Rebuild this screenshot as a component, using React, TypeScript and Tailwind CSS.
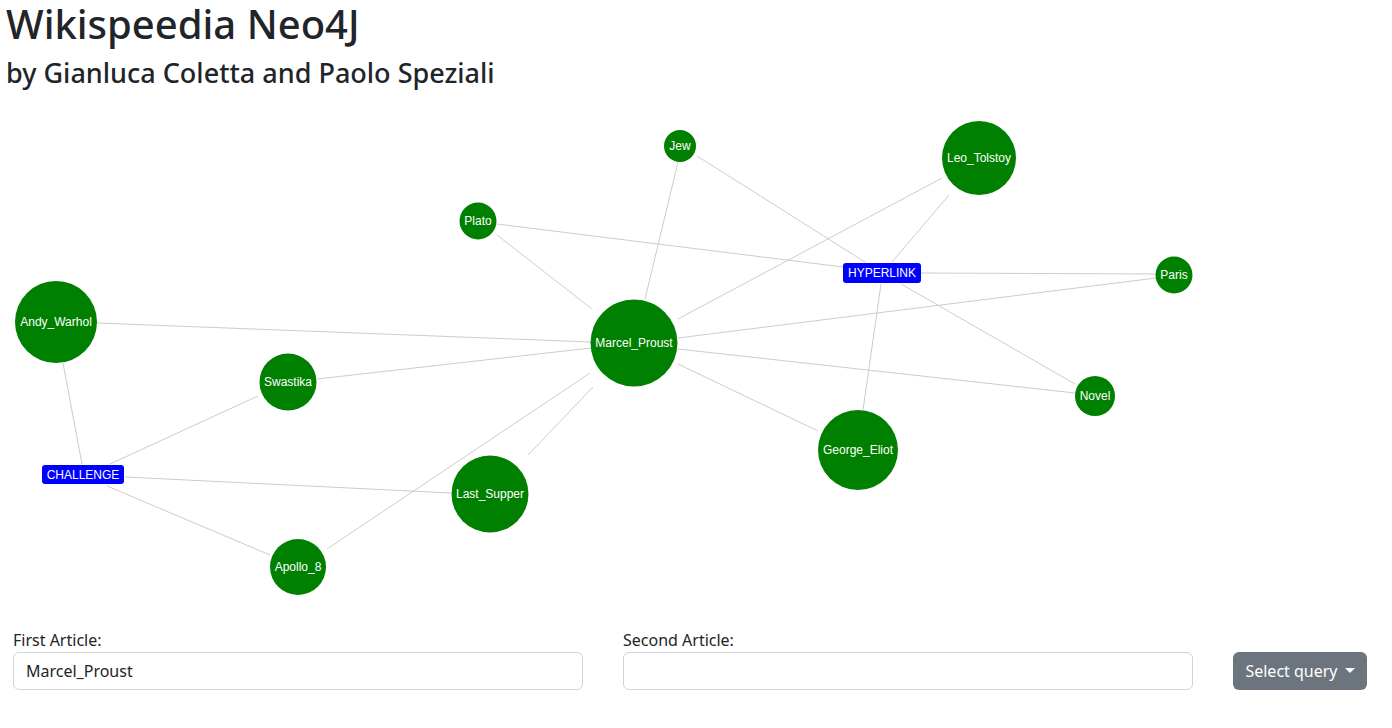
import React from 'react';

type GraphNode = { id: string; x: number; y: number; r: number };
type GraphRel = { id: string; x: number; y: number; w: number; h: number };

// article nodes, placed where the force layout left them
const nodes: GraphNode[] = [
  { id: 'Jew', x: 680, y: 146, r: 16 },
  { id: 'Leo_Tolstoy', x: 979, y: 158, r: 37 },
  { id: 'Plato', x: 478, y: 221, r: 18.5 },
  { id: 'Paris', x: 1174, y: 275, r: 18.5 },
  { id: 'Andy_Warhol', x: 56, y: 322, r: 41 },
  { id: 'Marcel_Proust', x: 634, y: 343, r: 43.5 },
  { id: 'Swastika', x: 288, y: 382, r: 28.5 },
  { id: 'Novel', x: 1095, y: 396, r: 20 },
  { id: 'George_Eliot', x: 858, y: 450, r: 40 },
  { id: 'Last_Supper', x: 490, y: 494, r: 38.5 },
  { id: 'Apollo_8', x: 298, y: 567, r: 28 },
];

const rels: GraphRel[] = [
  { id: 'HYPERLINK', x: 843, y: 263, w: 78, h: 20 },
  { id: 'CHALLENGE', x: 42, y: 465, w: 82, h: 19 },
];

// [x1, y1, x2, y2]
const links: [number, number, number, number][] = [
  [678, 162, 645, 299],
  [697, 156, 865, 262],
  [497, 224, 843, 267],
  [497, 235, 592, 309],
  [942, 178, 678, 319],
  [949, 195, 892, 262],
  [921, 273, 1156, 274],
  [901, 284, 1075, 384],
  [881, 284, 863, 410],
  [1156, 278, 678, 338],
  [678, 349, 1075, 393],
  [678, 364, 818, 431],
  [97, 323, 591, 342],
  [317, 379, 591, 348],
  [63, 363, 82, 464],
  [258, 396, 110, 464],
  [125, 477, 451, 493],
  [107, 486, 270, 555],
  [590, 373, 327, 549],
  [593, 387, 528, 455],
];

const Graph: React.FC = () => {
  return (
    <svg width="1392" height="530" viewBox="0 98 1392 530" className="block">
      {links.map(([x1, y1, x2, y2], i) => (
        <line key={i} x1={x1} y1={y1} x2={x2} y2={y2} stroke="#cccccc" strokeWidth={1} />
      ))}
      {nodes.map((n) => (
        <g key={n.id}>
          <circle cx={n.x} cy={n.y} r={n.r} fill="#008000" />
          <text
            x={n.x}
            y={n.y}
            dy="0.35em"
            textAnchor="middle"
            fill="#ffffff"
            fontSize={12}
            fontFamily="'Liberation Sans', Arial, sans-serif"
          >
            {n.id}
          </text>
        </g>
      ))}
      {rels.map((r) => (
        <g key={r.id}>
          <rect x={r.x} y={r.y} width={r.w} height={r.h} rx={3} fill="#0000ff" />
          <text
            x={r.x + r.w / 2}
            y={r.y + r.h / 2}
            dy="0.35em"
            textAnchor="middle"
            fill="#ffffff"
            fontSize={12}
            fontFamily="'Liberation Sans', Arial, sans-serif"
          >
            {r.id}
          </text>
        </g>
      ))}
    </svg>
  );
};

export default function App() {
  return (
    <div className="min-h-[728px] bg-white text-[#212529] font-['Noto_Sans',sans-serif]">
      <div className="px-[6px]">
        <h1 className="text-[40px] leading-[48px] font-medium mb-2">Wikispeedia Neo4J</h1>
        <h2 className="text-[27px] leading-[33.6px] font-medium mb-2">by Gianluca Coletta and Paolo Speziali</h2>
      </div>

      <Graph />

      <div className="flex items-end pl-[13px]">
        <div className="w-[570px]">
          <label className="block text-[16px] leading-6">First Article:</label>
          <input
            type="text"
            defaultValue="Marcel_Proust"
            className="block w-full h-[38px] px-3 text-[16px] border border-[#ced4da] rounded-[6px] text-[#212529] outline-none"
          />
        </div>
        <div className="w-[570px] ml-10">
          <label className="block text-[16px] leading-6">Second Article:</label>
          <input
            type="text"
            className="block w-full h-[38px] px-3 text-[16px] border border-[#ced4da] rounded-[6px] text-[#212529] outline-none"
          />
        </div>
        <button className="ml-10 h-[38px] w-[134px] flex items-center justify-center gap-[7px] rounded-[6px] bg-[#6c757d] text-white text-[16px]">
          Select query
          <span className="w-0 h-0 border-t-[5px] border-t-white border-x-[5px] border-x-transparent" />
        </button>
      </div>
    </div>
  );
}
